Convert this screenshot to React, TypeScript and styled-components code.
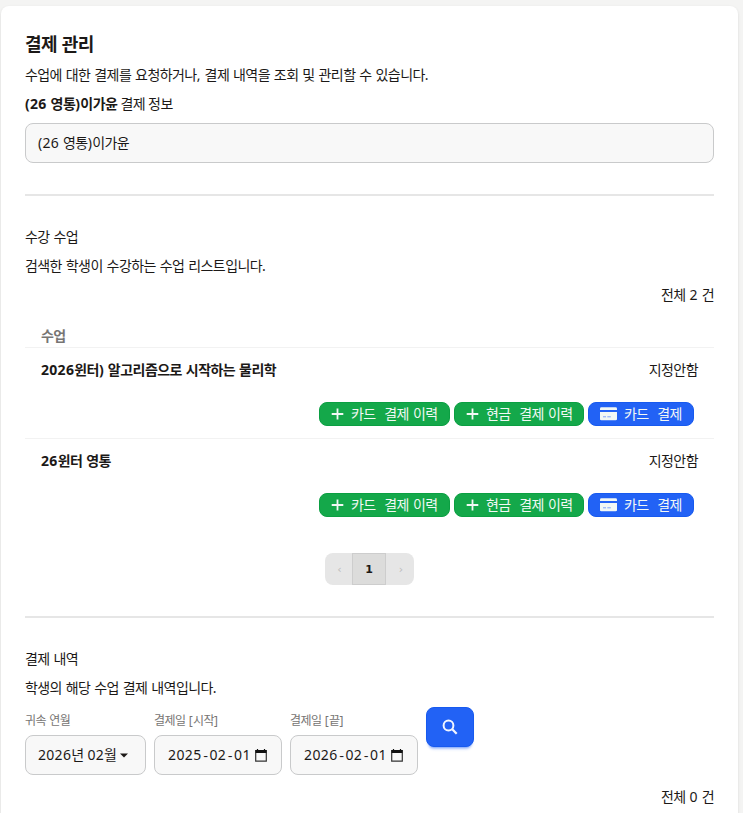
import React from "react";
import styled, { createGlobalStyle } from "styled-components";

const GlobalStyle = createGlobalStyle`
  *, *::before, *::after { box-sizing: border-box; }
  html, body { margin: 0; height: 100%; overflow: hidden; }
  body {
    background: #f4f4f3;
    color: #1c1917;
    font-family: "Noto Sans", "Noto Sans CJK KR", sans-serif;
    font-size: 14px;
  }
  button { font: inherit; margin: 0; }
`;

const Page = styled.main`
  height: 100vh;
  padding: 6px 5px 0 1px;
  overflow: hidden;
`;

const Card = styled.section`
  min-height: 900px;
  padding: 26px 24px 24px;
  display: flex;
  flex-direction: column;
  background: #fff;
  border-radius: 8px;
  box-shadow: 0 1px 3px rgba(0, 0, 0, 0.1), 0 1px 2px -1px rgba(0, 0, 0, 0.1);
`;

const Run = styled.span<{ $bold?: boolean; $words?: number }>`
  white-space: pre;
  font-weight: ${(p) => (p.$bold ? 700 : "inherit")};
  letter-spacing: ${(p) => (p.$bold ? -0.54 : -0.57)}px;
  word-spacing: ${(p) => p.$words ?? 0.8}px;
`;

const Latin = styled.span`
  letter-spacing: 0.3px;
`;

/* Hangul is set tight while digits and punctuation keep their natural width. */
function Text({ children, bold, words }: { children: string; bold?: boolean; words?: number }) {
  const parts = children.split(/([0-9()[\].,]+)/).filter(Boolean);
  return (
    <Run $bold={bold} $words={words}>
      {parts.map((part, i) =>
        /^[0-9()[\].,]/.test(part) ? <Latin key={i}>{part}</Latin> : part
      )}
    </Run>
  );
}

const Title = styled.h1`
  margin: 0;
  height: 29px;
  line-height: 25px;
  font-size: 18px;
  font-weight: 700;
`;

const Line = styled.div<{ $end?: boolean }>`
  height: 29px;
  line-height: 28px;
  text-align: ${(p) => (p.$end ? "right" : "left")};
`;

const Field = styled.div`
  height: 40px;
  display: flex;
  align-items: center;
  padding: 0 12px;
  line-height: 20px;
  background: #f8f8f8;
  border: 1px solid #c9cacb;
  border-radius: 8px;
`;

const StudentField = styled(Field)`
  margin-top: 4px;
`;

const MonthField = styled(Field)`
  gap: 4px;
`;

const Divider = styled.hr`
  width: 100%;
  height: 2px;
  margin: 31px 0 27px;
  border: 0;
  background: #e6e6e6;
`;

const TableHead = styled.div`
  height: 38px;
  padding: 16px 16px 0;
  line-height: 20px;
  color: #777573;
  border-bottom: 1px solid #f2f2f2;
`;

const CourseRow = styled.article`
  height: 91px;
  padding: 12px 16px 0;
  border-bottom: 1px solid #f2f2f2;
  &:last-child { border-bottom-color: transparent; }
`;

const CourseInfo = styled.div`
  height: 42px;
  display: flex;
  justify-content: space-between;
  line-height: 20px;
`;

const Actions = styled.div`
  display: flex;
  justify-content: flex-end;
  gap: 4px;
  padding-right: 4px;
`;

const ActionButton = styled.button<{ $tone: "green" | "blue"; $width: number }>`
  width: ${(p) => p.$width}px;
  height: 24px;
  display: flex;
  align-items: center;
  padding: 0 11px;
  gap: 7px;
  color: #f2f8f5;
  line-height: 20px;
  background: ${(p) => (p.$tone === "green" ? "#14a84a" : "#2262f5")};
  border: 1px solid ${(p) => (p.$tone === "green" ? "#0b9f42" : "#175aef")};
  border-radius: 8px;
  svg { flex: none; }
`;

const Pager = styled.nav`
  width: 89px;
  height: 32px;
  margin: 23px 0 0 300px;
  display: flex;
  background: #e6e6e6;
  border-radius: 8px;
  overflow: hidden;
`;

const PageButton = styled.button<{ $width: number; $active?: boolean }>`
  width: ${(p) => p.$width}px;
  padding: ${(p) => (p.$active ? "0" : "0 0 0 2px")};
  text-align: center;
  background: ${(p) => (p.$active ? "#dcdcdb" : "transparent")};
  border: ${(p) => (p.$active ? "1px solid #cdcdcd" : "0")};
  color: ${(p) => (p.$active ? "#1c1917" : "#bcbcbc")};
  font-family: "DejaVu Sans", sans-serif;
  font-size: 11px;
  font-weight: ${(p) => (p.$active ? 700 : 400)};
`;

const Filters = styled.form`
  display: flex;
  gap: 8px;
  height: 76px;
  margin: 0 0 4px;
  padding-top: 4px;
`;

const FilterItem = styled.label<{ $width: number }>`
  width: ${(p) => p.$width}px;
`;

const FilterLabel = styled.div`
  height: 28px;
  line-height: 27px;
  font-size: 12px;
  color: #777573;
`;

const DateField = styled(Field)`
  padding-left: 13px;
  gap: 4px;
`;

const DateText = styled.span`
  padding-top: 2px;
  white-space: nowrap;
  letter-spacing: 0.4px;
`;

const Dash = styled.span`
  font-family: "Liberation Mono", monospace;
  font-size: 13px;
  letter-spacing: 0;
`;

const SearchButton = styled.button`
  width: 48px;
  height: 40px;
  display: grid;
  place-items: center;
  padding: 0;
  color: #f2f6ff;
  background: #2262f5;
  border: 1px solid #175aef;
  border-radius: 8px;
  box-shadow: 0 3px 2px -2px rgba(34, 98, 245, 0.35), 0 4px 3px -2px rgba(34, 98, 245, 0.3);
`;

const PlusIcon = () => (
  <svg width="13" height="14" viewBox="0 0 13 14">
    <path d="M6.5 1.5v11M.7 7h11.6" stroke="currentColor" strokeWidth="1.8" />
  </svg>
);

const CardIcon = () => (
  <svg width="17" height="14" viewBox="0 0 17 14">
    <path d="M0 3V1.5Q0 .3 1.4.3h14.2Q17 .3 17 1.5V3z" fill="currentColor" />
    <path d="M0 5h17v7.2q0 1.1-1.4 1.1H1.4Q0 13.3 0 12.2z" fill="currentColor" />
    <path d="M3 9.8h3M7.3 9.8h3.5" stroke="#7fa4f9" />
  </svg>
);

const CaretIcon = () => (
  <svg width="8" height="5" viewBox="0 0 8 5">
    <path d="M0 .5h8L4 4.5z" fill="currentColor" />
  </svg>
);

const CalendarIcon = () => (
  <svg width="12" height="13" viewBox="0 0 12 13">
    <path d="M2.5 0v2M9.5 0v2" stroke="#111" strokeWidth="1.2" />
    <path d="M.7 1.7h10.6v10.5H.7z" fill="none" stroke="#333" strokeWidth="1.2" />
    <path d="M.5 1h11v3H.5z" fill="#111" />
  </svg>
);

const SearchIcon = () => (
  <svg width="16" height="16" viewBox="0 0 16 16" fill="none" stroke="currentColor">
    <circle cx="6.5" cy="6.5" r="4.9" strokeWidth="2" />
    <path d="m10 10 4.7 4.7" strokeWidth="2.3" />
  </svg>
);

const courses = ["2026윈터) 알고리즘으로 시작하는 물리학", "26윈터 영통"];

function Course({ name }: { name: string }) {
  return (
    <CourseRow>
      <CourseInfo>
        <Text bold>{name}</Text>
        <Text>지정안함</Text>
      </CourseInfo>
      <Actions>
        <ActionButton type="button" $tone="green" $width={131}>
          <PlusIcon />
          <Text words={1.2}>카드  결제 이력</Text>
        </ActionButton>
        <ActionButton type="button" $tone="green" $width={130}>
          <PlusIcon />
          <Text words={1.2}>현금  결제 이력</Text>
        </ActionButton>
        <ActionButton type="button" $tone="blue" $width={106}>
          <CardIcon />
          <Text words={1.2}>카드  결제</Text>
        </ActionButton>
      </Actions>
    </CourseRow>
  );
}

function DateFilter({ label, value }: { label: string; value: string }) {
  const [year, month, day] = value.split("-");
  return (
    <FilterItem $width={128}>
      <FilterLabel><Text>{label}</Text></FilterLabel>
      <DateField>
        <DateText>{year}<Dash>-</Dash>{month}<Dash>-</Dash>{day}</DateText>
        <CalendarIcon />
      </DateField>
    </FilterItem>
  );
}

export default function App() {
  return (
    <>
      <GlobalStyle />
      <Page>
        <Card>
          <Title><Text bold words={0.5}>결제 관리</Text></Title>
          <Line><Text>수업에 대한 결제를 요청하거나, 결제 내역을 조회 및 관리할 수 있습니다.</Text></Line>
          <Line><Text bold>(26 영통)이가윤</Text><Text words={0}> 결제 정보</Text></Line>
          <StudentField><Text>(26 영통)이가윤</Text></StudentField>

          <Divider />
          <Line><Text>수강 수업</Text></Line>
          <Line><Text>검색한 학생이 수강하는 수업 리스트입니다.</Text></Line>
          <Line $end><Text>전체 2 건</Text></Line>
          <TableHead><Text bold>수업</Text></TableHead>
          <div>
            {courses.map((name) => <Course key={name} name={name} />)}
          </div>
          <Pager>
            <PageButton type="button" $width={27}>‹</PageButton>
            <PageButton type="button" $width={34} $active>1</PageButton>
            <PageButton type="button" $width={28}>›</PageButton>
          </Pager>

          <Divider />
          <Line><Text>결제 내역</Text></Line>
          <Line><Text>학생의 해당 수업 결제 내역입니다.</Text></Line>
          <Filters>
            <FilterItem $width={121}>
              <FilterLabel><Text>귀속 연월</Text></FilterLabel>
              <MonthField><Text>2026년 02월</Text><CaretIcon /></MonthField>
            </FilterItem>
            <DateFilter label="결제일 [시작]" value="2025-02-01" />
            <DateFilter label="결제일 [끝]" value="2026-02-01" />
            <SearchButton type="button" aria-label="검색"><SearchIcon /></SearchButton>
          </Filters>
          <Line $end><Text>전체 0 건</Text></Line>
        </Card>
      </Page>
    </>
  );
}
